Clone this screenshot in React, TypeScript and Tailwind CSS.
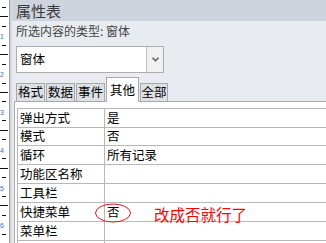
import React from "react";

const FONT = "font-['Noto_Sans_CJK_SC','Microsoft_YaHei',sans-serif]";

function Ruler() {
  const ticks: React.ReactNode[] = [];
  const step = 37.8 / 4;
  for (let i = 0; i < 27; i++) {
    const y = Math.round(-2.5 + i * step) + 0.5;
    if (i % 4 === 0) {
      if (i > 0) {
        ticks.push(
          <text key={"d" + i} x={0} y={y + 3} fontSize={7} fill="#3a6fc0" fontFamily="Liberation Sans, sans-serif">
            {i / 4}
          </text>
        );
      }
    } else if (i % 2 === 0) {
      ticks.push(<line key={i} x1={0} x2={8} y1={y} y2={y} stroke="#111" strokeWidth={1} />);
    } else {
      ticks.push(<line key={i} x1={2} x2={6} y1={y} y2={y} stroke="#111" strokeWidth={1} />);
    }
  }
  return (
    <svg width={9} height={243} className="block shrink-0 bg-white">
      {ticks}
    </svg>
  );
}

const rows: [string, string][] = [
  ["弹出方式", "是"],
  ["模式", "否"],
  ["循环", "所有记录"],
  ["功能区名称", ""],
  ["工具栏", ""],
  ["快捷菜单", "否"],
  ["菜单栏", ""],
  ["", ""],
];

const rowH = [
  "h-[19px]",
  "h-[18px]",
  "h-[19px]",
  "h-[19px]",
  "h-[19px]",
  "h-[19px]",
  "h-[19px]",
  "h-[19px]",
];

export default function App() {
  return (
    <div className={`relative w-[326px] h-[243px] overflow-hidden flex bg-white ${FONT}`}>
      <Ruler />
      <div className="w-[1px] bg-[#9a9da2] shrink-0" />
      <div className="w-[2px] bg-[#d3d8de] shrink-0" />
      <div className="flex-1 flex flex-col bg-[#e8ecf1] min-w-0 h-[243px] overflow-hidden">
        <div className="shrink-0 h-[21px] bg-[#cdd4dd] pl-[4px] flex items-center text-[15px] leading-none text-[#3a3a3a]">
          属性表
        </div>
        <div className="shrink-0 h-[20px] pl-[4px] flex items-center text-[12px] leading-none text-[#444]">
          所选内容的类型: 窗体
        </div>
        <div className="shrink-0 mt-[5px] ml-[4px] w-[148px] h-[27px] border border-[#adadad] bg-white flex items-stretch">
          <div className="flex-1 pl-[3px] flex items-center text-[12.5px] leading-none text-black">窗体</div>
          <div className="w-[17px] border-l border-[#c4c4c4] bg-[#f1f1f1] flex items-center justify-center">
            <svg width="7" height="5" viewBox="0 0 7 5">
              <path d="M0.5 0.8 L3.5 3.8 L6.5 0.8" fill="none" stroke="#555" strokeWidth="1.4" />
            </svg>
          </div>
        </div>
        <div className="shrink-0 mt-[4px] ml-[4px] h-[24px] flex items-end gap-[1px] text-[12.5px] leading-none text-black">
          {["格式", "数据", "事件"].map((t) => (
            <div
              key={t}
              className="w-[29px] h-[18px] border border-b-0 border-[#a8a8a8] bg-[#dde1e6] flex items-center justify-center"
            >
              {t}
            </div>
          ))}
          <div className="relative z-10 -mb-[1px] w-[33px] h-[25px] border border-b-0 border-[#a8a8a8] bg-white flex items-center justify-center">
            其他
          </div>
          <div className="w-[28px] h-[18px] border border-b-0 border-[#a8a8a8] bg-[#dde1e6] flex items-center justify-center">
            全部
          </div>
        </div>
        <div className="shrink-0 ml-[2px] h-[200px] border-t border-l border-[#a8a8a8] bg-white pl-[2px] pt-[6px]">
          <div className="border-l border-[#b8b8b8] text-[12.5px] leading-none text-black">
            {rows.map(([k, v], i) => (
              <div key={i} className={`${rowH[i]} border-t border-[#b8b8b8] flex`}>
                <div className="w-[86px] pl-[2px] flex items-center">{k}</div>
                <div className="flex-1 border-l border-[#b8b8b8] pl-[2px] flex items-center">{v}</div>
              </div>
            ))}
          </div>
        </div>
      </div>
      <svg className="absolute left-[94px] top-[203px]" width="38" height="20" viewBox="0 0 38 20">
        <ellipse cx="19" cy="10" rx="17.5" ry="9" fill="none" stroke="#e3161b" strokeWidth="1" />
      </svg>
      <div className="absolute left-[154px] top-[205px] text-[15.5px] leading-[18px] text-[#ff0000]">
        改成否就行了
      </div>
    </div>
  );
}
